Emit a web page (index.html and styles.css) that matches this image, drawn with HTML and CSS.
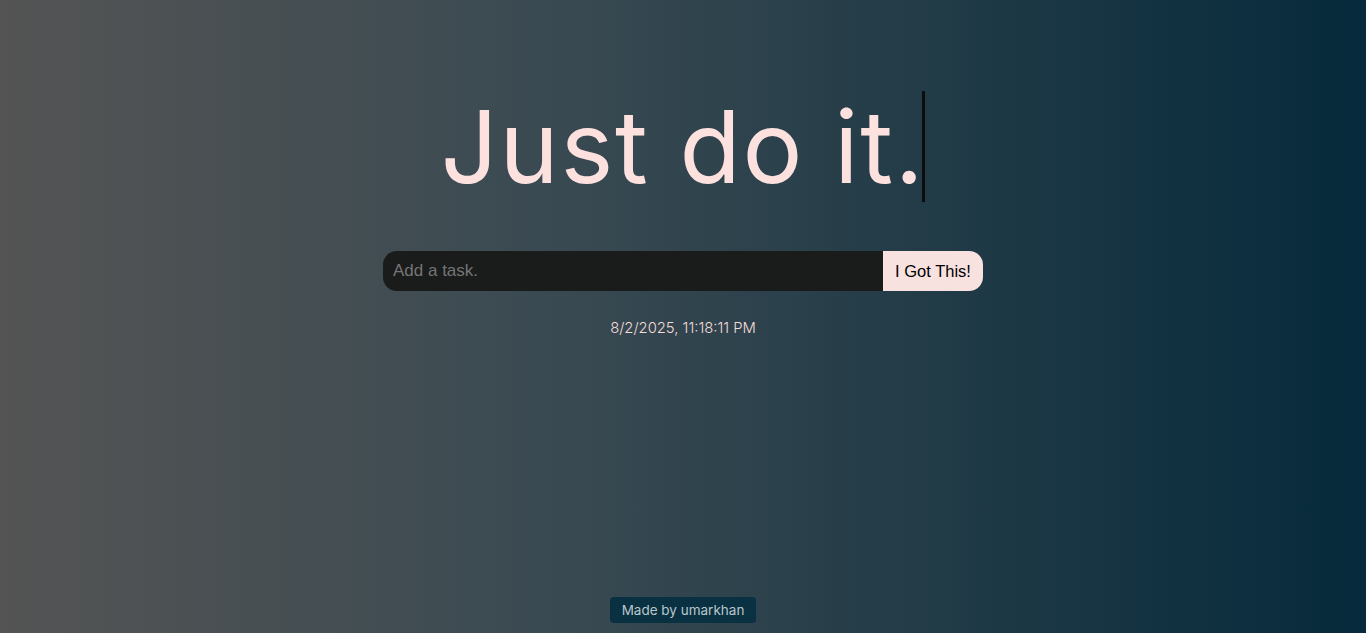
FILE: index.html
```html
<!DOCTYPE html>
<html lang="en">
<head>
<meta charset="utf-8">
<title>Just do it.</title>
<link rel="stylesheet" href="styles.css">
</head>
<body>
<main class="page">
  <h1 class="title"><span class="title-text">Just do it.</span><span class="caret"></span></h1>
  <form class="task-form">
    <input class="task-input" type="text" placeholder="Add a task.">
    <button class="task-btn" type="button">I Got This!</button>
  </form>
  <p class="clock">8/2/2025, 11:18:11 PM</p>
  <footer class="credit">Made by umarkhan</footer>
</main>
</body>
</html>
```
FILE: styles.css
```css
html, body {
  margin: 0;
  padding: 0;
  height: 100%;
}
body {
  background: linear-gradient(to right, #545454 0%, #3a4a52 40%, #062a3b 100%);
  font-family: "Inter", "Noto Sans", sans-serif;
  overflow: hidden;
}
.page {
  height: 633px;
  display: flex;
  flex-direction: column;
  align-items: center;
  position: relative;
}
.title {
  margin: 91px 0 0 0;
  display: flex;
  align-items: stretch;
  height: 111px;
  font-weight: 400;
}
.title-text {
  font-size: 100px;
  line-height: 111px;
  color: #fde1df;
  letter-spacing: 1.8px;
  padding-left: 0;
}
.caret {
  width: 3px;
  background: #0c0c0c;
  margin-left: -3px;
}
.task-form {
  margin-top: 49px;
  display: flex;
  width: 600px;
  height: 40px;
  border-radius: 14px;
  overflow: hidden;
}
.task-input {
  flex: 1;
  border: none;
  outline: none;
  background: #1a1b1b;
  color: #ddd;
  font-family: "Liberation Sans", Arial, sans-serif;
  font-size: 17px;
  padding: 0 10px;
}
.task-input::placeholder {
  color: #757575;
}
.task-btn {
  width: 100px;
  border: none;
  background: #f8e2e0;
  color: #000;
  font-family: "Liberation Sans", Arial, sans-serif;
  font-size: 16.5px;
  padding: 0;
}
.clock {
  margin: 28px 0 0 0;
  font-size: 14.8px;
  color: #f5dcd8;
  line-height: 18px;
  font-weight: 300;
}
.credit {
  position: absolute;
  bottom: 10px;
  background: #0a3142;
  color: #b9c6cc;
  font-size: 13.5px;
  padding: 5px 12px;
  border-radius: 4px;
  line-height: 16px;
}
```
